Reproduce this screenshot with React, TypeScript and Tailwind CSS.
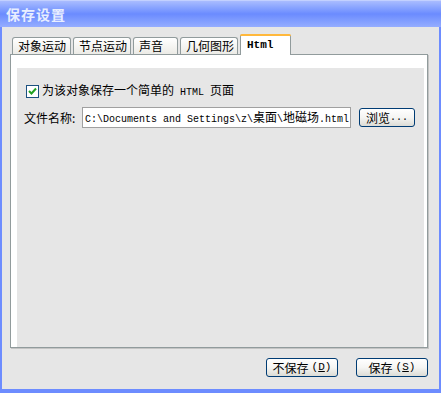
const cjk = '"Noto Sans CJK SC", "DejaVu Sans", sans-serif'
const mono = '"Liberation Mono", "Noto Sans CJK SC", monospace'

function Tab({ label, width, active }: { label: string; width: number; active?: boolean }) {
  if (active) {
    return (
      <div
        className="relative -mb-px h-[21px] flex items-start pl-[6px] pt-[3px] bg-white border border-b-0 border-t-0 border-[#919b9c] rounded-t-[3px] z-10"
        style={{ width }}
      >
        <div className="absolute left-[-1px] right-[-1px] top-0 h-[2px] rounded-t-[3px] bg-[#ffb83c]" />
        <span className="text-[11px] font-semibold text-black" style={{ fontFamily: mono }}>{label}</span>
      </div>
    )
  }
  return (
    <div
      className="h-[17px] flex items-center pl-[5px] bg-gradient-to-b from-white to-[#ecebe6] border border-b-0 border-[#919b9c] rounded-t-[3px]"
      style={{ width, fontFamily: cjk }}
    >
      <span className="text-[12px] leading-none text-black">{label}</span>
    </div>
  )
}

function XpButton({ children, className }: { children: React.ReactNode; className: string }) {
  return (
    <div
      className={
        'flex items-center justify-center border border-[#003c74] rounded-[3px] bg-gradient-to-b from-white via-[#f5f5f3] to-[#dcdcd6] text-[12px] text-black ' +
        className
      }
      style={{ fontFamily: cjk }}
    >
      {children}
    </div>
  )
}

export default function App() {
  return (
    <div className="w-[441px] h-[393px] flex flex-col bg-[#e6e6e6] overflow-hidden" style={{ fontFamily: cjk }}>
      {/* title bar */}
      <div className="h-[27px] flex items-center pl-[6px] bg-gradient-to-b from-[#a9bcff] via-[#6b8bff] to-[#95adff] border-t border-[#c2d0ff]">
        <span className="text-[14px] font-bold text-[#e8eeff] tracking-[1px]">保存设置</span>
      </div>

      {/* body */}
      <div className="flex-1 flex flex-col border-l-2 border-r-2 border-b-4 border-[#6d8cff] pl-[8px] pr-[11px] pt-[7px]">
        {/* tabs */}
        <div className="flex items-end gap-[2px] pl-[2px]">
          <Tab label="对象运动" width={59} />
          <Tab label="节点运动" width={58} />
          <Tab label="声音" width={45} />
          <Tab label="几何图形" width={58} />
          <Tab label="Html" width={51} active />
        </div>

        {/* panel */}
        <div className="w-[418px] h-[294px] flex flex-col bg-white border border-[#919b9c] shadow-[1px_1px_0_#c4c4c4] pt-[13px] pl-[6px] pr-[3px]">
          <div className="flex-1 bg-[#e6e6e6] flex flex-col pt-[16px] pl-[7px]">
            <div className="flex items-center gap-[3px] pl-[2px]">
              <div className="w-[13px] h-[13px] border border-[#1c5180] bg-white flex items-center justify-center">
                <svg width="9" height="9" viewBox="0 0 9 9">
                  <path d="M1 4 L3.5 6.5 L8 1.5" stroke="#21a121" strokeWidth="2" fill="none" />
                </svg>
              </div>
              <span className="text-[12px] text-black leading-none">
                为该对象保存一个简单的<span className="text-[10px]" style={{ fontFamily: mono }}> HTML </span>页面
              </span>
            </div>

            <div className="flex items-center mt-[9px]">
              <span className="text-[12px] text-black w-[58px]">文件名称:</span>
              <div className="w-[269px] h-[21px] bg-white border border-[#a0a0a0] flex items-center pl-[2px] overflow-hidden">
                <span className="text-[10px] text-black whitespace-nowrap leading-none" style={{ fontFamily: mono }}>
                  C:\Documents and Settings\z\<span className="text-[12px]" style={{ fontFamily: cjk }}>桌面</span>\<span className="text-[12px]" style={{ fontFamily: cjk }}>地磁场</span>.html
                </span>
              </div>
              <XpButton className="ml-[8px] w-[56px] h-[19px]">
                浏览<span style={{ fontFamily: mono }} className="text-[10px]">...</span>
              </XpButton>
            </div>
          </div>
        </div>

        {/* bottom buttons */}
        <div className="flex justify-end gap-[18px] mt-[10px]">
          <XpButton className="w-[72px] h-[19px]">
            不保存<span className="ml-[3px] text-[11px]" style={{ fontFamily: mono }}>(<span className="underline">D</span>)</span>
          </XpButton>
          <XpButton className="w-[72px] h-[19px]">
            保存<span className="ml-[3px] text-[11px]" style={{ fontFamily: mono }}>(<span className="underline">S</span>)</span>
          </XpButton>
        </div>
      </div>
    </div>
  )
}
